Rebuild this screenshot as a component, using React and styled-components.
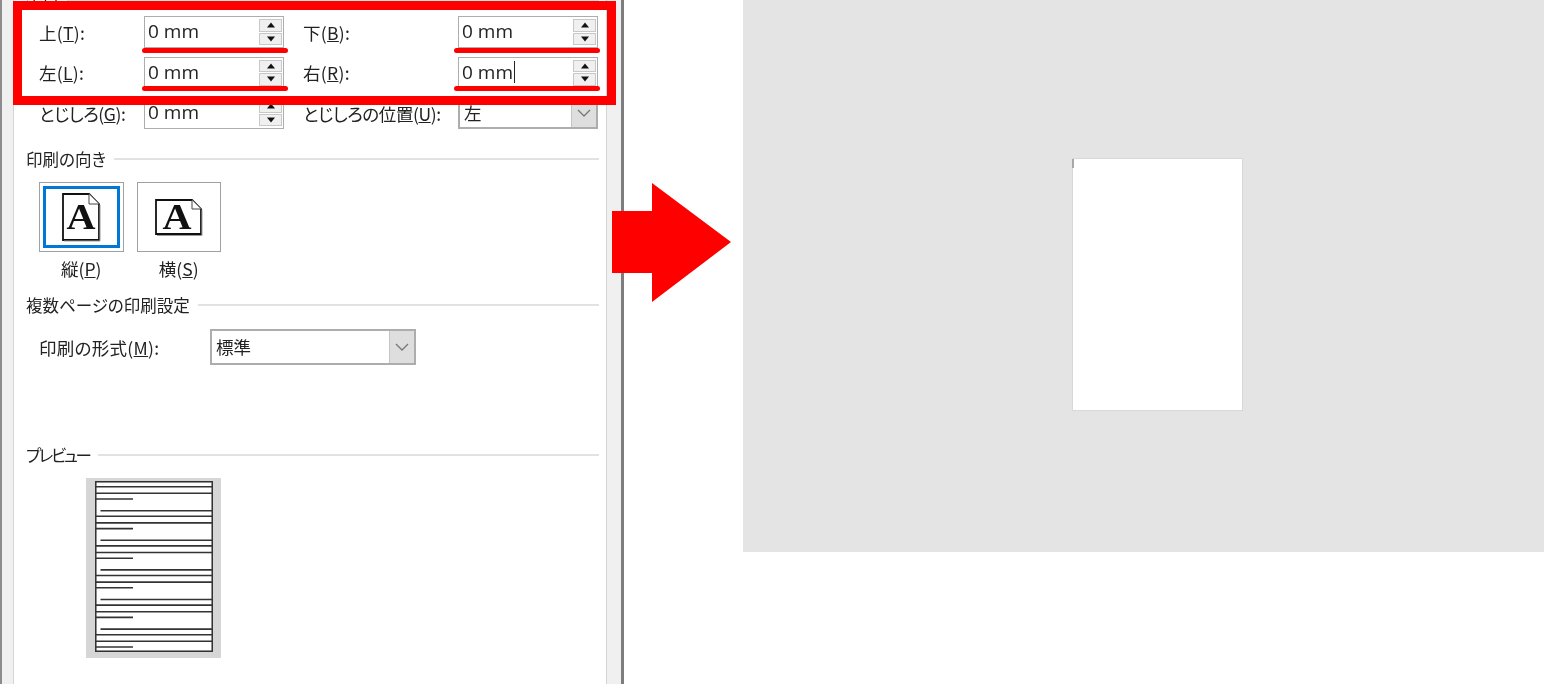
import React from 'react'
import styled, { createGlobalStyle } from 'styled-components'

const Global = createGlobalStyle`
    html, body {
        margin: 0;
        padding: 0;
        background: #fff;
    }
`

const Page = styled.div`
    position: relative;
    display: flex;
    width: 1544px;
    height: 684px;
    overflow: hidden;
    background: #fff;
    font-family: "Noto Sans CJK JP", "Noto Sans", sans-serif;
    font-feature-settings: "palt";
    color: #222;
`

const Dialog = styled.div`
    flex: none;
    width: 624px;
    height: 684px;
    box-sizing: border-box;
    display: flex;
    background: #f0f0f0;
    border-left: 2px solid #8c8c8c;
    border-right: 3px solid #7d7d7d;
`

const DialogBody = styled.div`
    flex: none;
    width: 594px;
    height: 684px;
    margin-left: 11px;
    box-sizing: border-box;
    background: #fff;
    border-left: 1px solid #d4d4d4;
    border-right: 1px solid #d4d4d4;
    padding-left: 12px;
    overflow: hidden;
    filter: blur(0.45px);
`

const Heading = styled.div`
    display: flex;
    align-items: center;
    gap: 8px;
    width: 573px;
    height: 24px;
    font-size: 16.5px;
    line-height: 24px;
    white-space: nowrap;
    letter-spacing: ${p => p.$spacing || 0}px;
    margin-top: ${p => p.$top}px;
    &::after {
        content: '';
        flex: 1;
        height: 1.5px;
        background: #e2e2e2;
    }
`

const FieldGrid = styled.div`
    display: grid;
    grid-template-columns: 105px 140px 174px 140px;
    grid-auto-rows: 32px;
    row-gap: 8.5px;
    margin: 3px 0 0 13px;
    align-items: center;
`

const Label = styled.label`
    font-size: 17.5px;
    letter-spacing: ${p => (p.$tight ? '-.4px' : '.3px')};
    white-space: nowrap;
    padding-left: ${p => p.$indent || 0}px;
`

const Field = styled.div`
    box-sizing: border-box;
    height: 32px;
    display: flex;
    align-items: center;
    justify-content: space-between;
    padding: 2px 1px 2px 3px;
    border: 1.5px solid #adadad;
    background: #fff;
`

const Value = styled.span`
    font-family: "Open Sans", "Noto Sans CJK JP", sans-serif;
    font-size: 19px;
    line-height: 1;
    padding-bottom: 1px;
    display: flex;
    align-items: center;
`

const Caret = styled.i`
    display: inline-block;
    width: 1.5px;
    height: 22px;
    margin-left: 1px;
    background: #222;
`

const Spinner = styled.div`
    display: flex;
    flex-direction: column;
    gap: 1px;
    width: 23px;
    height: 100%;
`

const SpinButton = styled.div`
    flex: 1;
    display: flex;
    align-items: center;
    justify-content: center;
    box-sizing: border-box;
    background: #f0f0f0;
    border: 1.5px solid #c8c8c8;
`

const SelectBox = styled.div`
    box-sizing: border-box;
    width: ${p => p.$width}px;
    height: ${p => p.$height}px;
    display: flex;
    align-items: stretch;
    border: 2px solid #adadad;
    background: #fff;
`

const SelectText = styled.span`
    flex: 1;
    display: flex;
    align-items: center;
    padding: 0 0 1px 4px;
    font-size: 17.5px;
`

const SelectArrow = styled.div`
    flex: none;
    width: 24px;
    display: flex;
    align-items: center;
    justify-content: center;
    background: #dedede;
    border-left: 1px solid #c4c4c4;
`

const OrientRow = styled.div`
    display: flex;
    gap: 13px;
    margin: 11px 0 0 13px;
`

const OrientItem = styled.div`
    display: flex;
    flex-direction: column;
    align-items: center;
    width: 84.5px;
`

const OrientButton = styled.div`
    box-sizing: border-box;
    width: 84.5px;
    height: 70px;
    display: flex;
    align-items: center;
    justify-content: center;
    border: 1.5px solid #a0a0a0;
    background: #fff;
    padding: 3px;
`

const OrientInner = styled.div`
    width: 100%;
    height: 100%;
    box-sizing: border-box;
    display: flex;
    align-items: center;
    justify-content: center;
    border: 3px solid ${p => (p.$active ? '#0078d7' : 'transparent')};
`

const OrientLabel = styled.span`
    margin-top: 5px;
    font-size: 17.5px;
    line-height: 24px;
`

const FormatRow = styled.div`
    display: flex;
    align-items: center;
    margin: 12px 0 0 13px;
`

const FormatLabel = styled(Label)`
    width: 171px;
`

const PreviewSheet = styled.div`
    width: 135px;
    height: 180px;
    margin: 11px 0 0 60px;
    background: #d6d6d6;
    display: flex;
    justify-content: center;
    padding-top: 3px;
    box-sizing: border-box;
`

const Stage = styled.div`
    flex: none;
    margin-left: 119px;
    width: 801px;
    height: 552px;
    background: #e4e4e4;
    display: flex;
    justify-content: center;
`

const StagePage = styled.div`
    position: relative;
    box-sizing: border-box;
    width: 171px;
    height: 253px;
    margin: 158px 0 0 28px;
    background: #fff;
    border: 1px solid #d8d8d8;
    &::before {
        content: '';
        position: absolute;
        top: 0;
        left: -1px;
        width: 2px;
        height: 9px;
        background: #a8a8a8;
    }
`

const Highlight = styled.div`
    position: absolute;
    left: 13px;
    top: 1px;
    width: 603px;
    height: 104px;
    box-sizing: border-box;
    border: 9px solid #ff0000;
`

const Underline = styled.div`
    position: absolute;
    left: ${p => p.$x}px;
    top: ${p => p.$y}px;
    width: 146px;
    height: 5px;
    border-radius: 3px;
    background: #ff0000;
`

const ArrowMark = styled.svg`
    position: absolute;
    left: 612px;
    top: 183px;
`

const Tri = ({ down }) => (
    <svg width="10" height="6" viewBox="0 0 10 6">
        <path d={down ? 'M1 .5h8L5 5.5z' : 'M5 .5l4 5H1z'} fill="#111" />
    </svg>
)

const Chevron = () => (
    <svg width="14" height="8" viewBox="0 0 14 8">
        <path d="M1 1l6 6 6-6" fill="none" stroke="#777" strokeWidth="1.3" />
    </svg>
)

const SpinField = ({ value, caret }) => (
    <Field>
        <Value>{value}{caret && <Caret />}</Value>
        <Spinner>
            <SpinButton><Tri /></SpinButton>
            <SpinButton><Tri down /></SpinButton>
        </Spinner>
    </Field>
)

const DocIcon = ({ landscape }) => (
    landscape ? (
        <svg width="49" height="39" viewBox="0 0 49 39">
            <path d="M2 2h36l9 9v25H2z" fill="#fff" stroke="#111" strokeWidth="1.8" />
            <path d="M38 2v9h9" fill="#fff" stroke="#444" strokeWidth="1" />
            <path d="M3 37.5h45V12" fill="none" stroke="#999" strokeWidth="1" />
            <text x="8.5" y="31" textLength="29" lengthAdjust="spacingAndGlyphs" fontFamily="Liberation Serif, serif" fontSize="35" fontWeight="700" fill="#111">A</text>
        </svg>
    ) : (
        <svg width="40" height="50" viewBox="0 0 40 50">
            <path d="M2 2h26l10 10v36H2z" fill="#fff" stroke="#111" strokeWidth="1.8" />
            <path d="M28 2v10h10" fill="#fff" stroke="#444" strokeWidth="1" />
            <path d="M3 49h36V13" fill="none" stroke="#999" strokeWidth="1" />
            <text x="5.5" y="37" textLength="29" lengthAdjust="spacingAndGlyphs" fontFamily="Liberation Serif, serif" fontSize="35" fontWeight="700" fill="#111">A</text>
        </svg>
    )
)

// repeating block of the little preview page: three full rules, a short one, an indented one
const previewLines = () => {
    let lines = []
    for (let i = 0; i < 6; i++) {
        let y = i * 29.6
        lines.push([0, 117, y + 5.7], [0, 117, y + 12.3], [0, 38, y + 18], i < 5 ? [5.5, 117, y + 29.7] : null)
    }
    return lines.filter(Boolean)
}

const PreviewPage = () => (
    <svg width="118" height="171" viewBox="0 0 118 171">
        <rect x=".75" y=".75" width="116.5" height="169.5" fill="#fff" stroke="#333" strokeWidth="1.6" />
        {previewLines().map(([a, b, y], i) => (
            <line key={i} x1={a} x2={b} y1={y} y2={y} stroke="#333" strokeWidth="1.6" />
        ))}
    </svg>
)

const App = () => (
    <Page>
        <Global />
        <Dialog>
            <DialogBody>
                <Heading $top={-11}>余白</Heading>
                <FieldGrid>
                    <Label>上(<u>T</u>):</Label>
                    <SpinField value="0 mm" />
                    <Label $indent={19}>下(<u>B</u>):</Label>
                    <SpinField value="0 mm" />
                    <Label>左(<u>L</u>):</Label>
                    <SpinField value="0 mm" />
                    <Label $indent={19}>右(<u>R</u>):</Label>
                    <SpinField value="0 mm" caret />
                    <Label $tight>とじしろ(<u>G</u>):</Label>
                    <SpinField value="0 mm" />
                    <Label $tight $indent={19}>とじしろの位置(<u>U</u>):</Label>
                    <SelectBox $width={140} $height={32}>
                        <SelectText>左</SelectText>
                        <SelectArrow><Chevron /></SelectArrow>
                    </SelectBox>
                </FieldGrid>
                <Heading $top={18}>印刷の向き</Heading>
                <OrientRow>
                    <OrientItem>
                        <OrientButton>
                            <OrientInner $active><DocIcon /></OrientInner>
                        </OrientButton>
                        <OrientLabel>縦(<u>P</u>)</OrientLabel>
                    </OrientItem>
                    <OrientItem>
                        <OrientButton>
                            <OrientInner><DocIcon landscape /></OrientInner>
                        </OrientButton>
                        <OrientLabel>横(<u>S</u>)</OrientLabel>
                    </OrientItem>
                </OrientRow>
                <Heading $top={12}>複数ページの印刷設定</Heading>
                <FormatRow>
                    <FormatLabel>印刷の形式(<u>M</u>):</FormatLabel>
                    <SelectBox $width={206} $height={36}>
                        <SelectText>標準</SelectText>
                        <SelectArrow><Chevron /></SelectArrow>
                    </SelectBox>
                </FormatRow>
                <Heading $top={78} $spacing={-2.3}>プレビュー</Heading>
                <PreviewSheet>
                    <PreviewPage />
                </PreviewSheet>
            </DialogBody>
        </Dialog>
        <Stage>
            <StagePage />
        </Stage>
        <Highlight />
        <Underline $x={142} $y={48} />
        <Underline $x={142} $y={86} />
        <Underline $x={454} $y={48} />
        <Underline $x={454} $y={86} />
        <ArrowMark width="120" height="120" viewBox="0 0 120 120">
            <path d="M0 28h40V0l79 59-79 60V90H0z" fill="#ff0000" />
        </ArrowMark>
    </Page>
)

export default App
